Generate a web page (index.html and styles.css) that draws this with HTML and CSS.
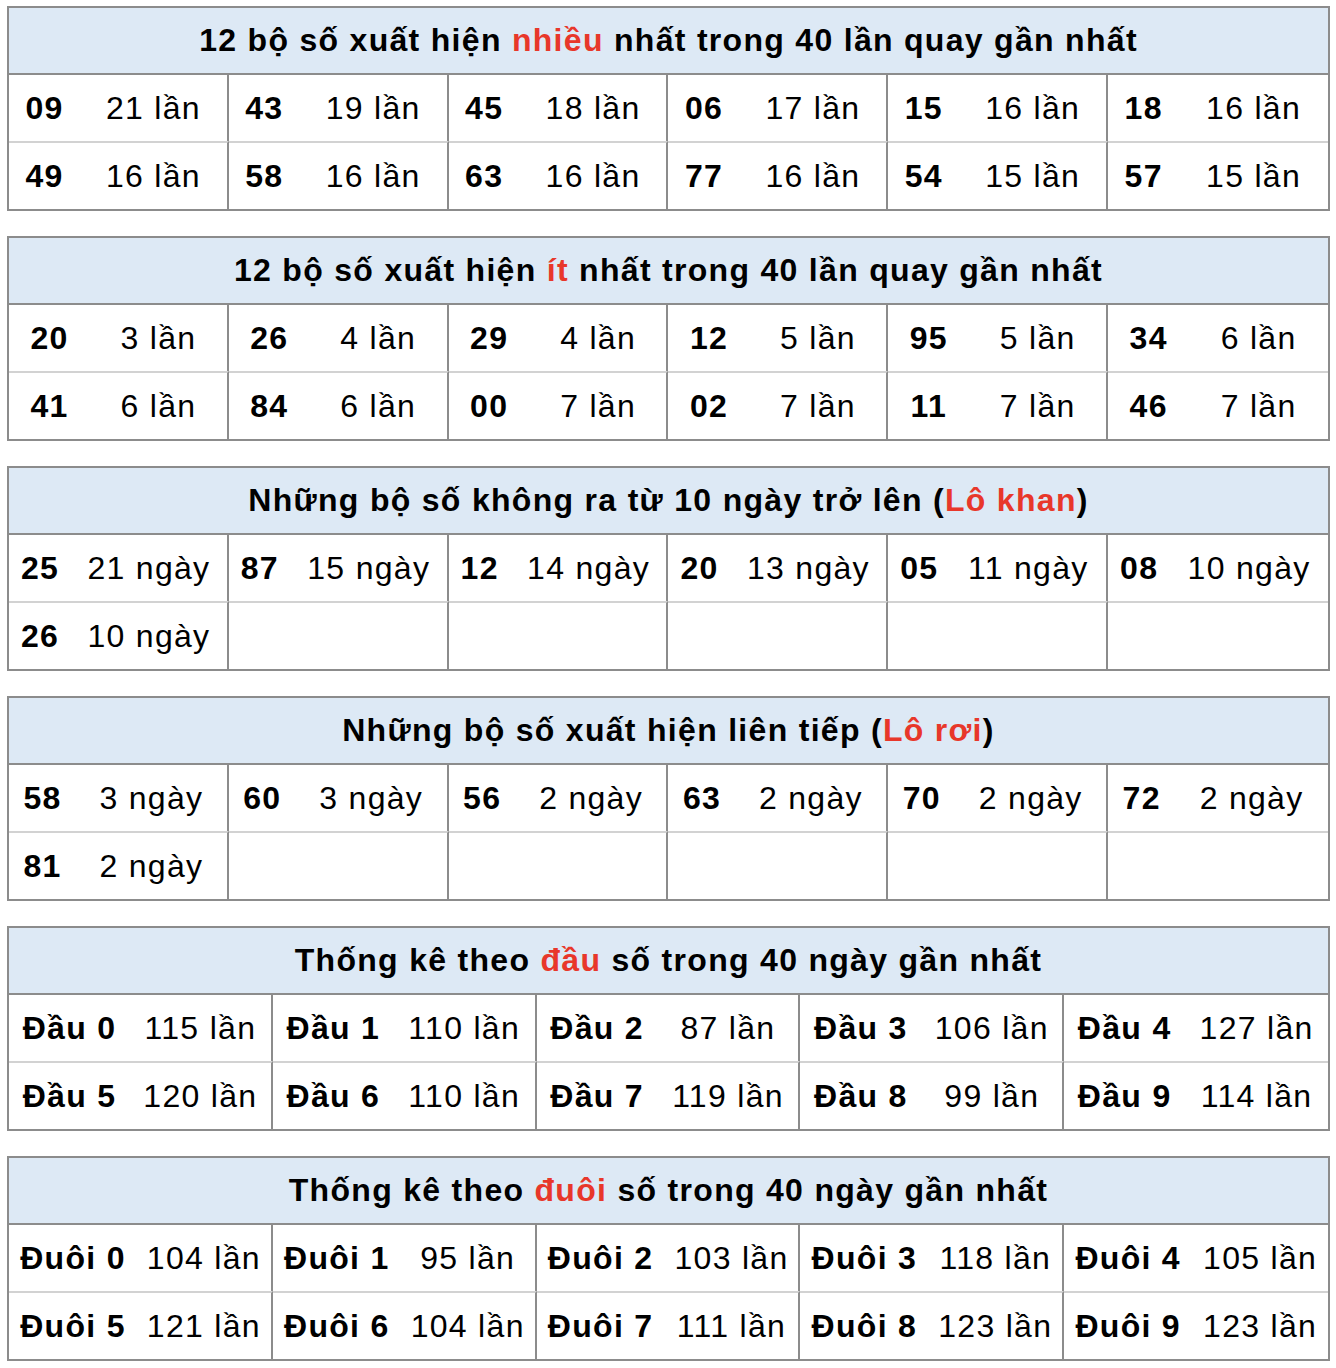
FILE: index.html
```html
<!DOCTYPE html>
<html lang="vi">
<head>
<meta charset="utf-8">
<title>Thống kê</title>
<link rel="stylesheet" href="styles.css">
</head>
<body>
<section class="stat t-most">
  <div class="head">12 bộ số xuất hiện <span class="hl">nhiều</span> nhất trong 40 lần quay gần nhất</div>
  <div class="grid six">
    <div class="pair"><b>09</b><span>21 lần</span></div>
    <div class="pair"><b>43</b><span>19 lần</span></div>
    <div class="pair"><b>45</b><span>18 lần</span></div>
    <div class="pair"><b>06</b><span>17 lần</span></div>
    <div class="pair"><b>15</b><span>16 lần</span></div>
    <div class="pair"><b>18</b><span>16 lần</span></div>
    <div class="pair"><b>49</b><span>16 lần</span></div>
    <div class="pair"><b>58</b><span>16 lần</span></div>
    <div class="pair"><b>63</b><span>16 lần</span></div>
    <div class="pair"><b>77</b><span>16 lần</span></div>
    <div class="pair"><b>54</b><span>15 lần</span></div>
    <div class="pair"><b>57</b><span>15 lần</span></div>
  </div>
</section>
<section class="stat t-least">
  <div class="head">12 bộ số xuất hiện <span class="hl">ít</span> nhất trong 40 lần quay gần nhất</div>
  <div class="grid six">
    <div class="pair"><b>20</b><span>3 lần</span></div>
    <div class="pair"><b>26</b><span>4 lần</span></div>
    <div class="pair"><b>29</b><span>4 lần</span></div>
    <div class="pair"><b>12</b><span>5 lần</span></div>
    <div class="pair"><b>95</b><span>5 lần</span></div>
    <div class="pair"><b>34</b><span>6 lần</span></div>
    <div class="pair"><b>41</b><span>6 lần</span></div>
    <div class="pair"><b>84</b><span>6 lần</span></div>
    <div class="pair"><b>00</b><span>7 lần</span></div>
    <div class="pair"><b>02</b><span>7 lần</span></div>
    <div class="pair"><b>11</b><span>7 lần</span></div>
    <div class="pair"><b>46</b><span>7 lần</span></div>
  </div>
</section>
<section class="stat t-khan">
  <div class="head">Những bộ số không ra từ 10 ngày trở lên (<span class="hl">Lô khan</span>)</div>
  <div class="grid six">
    <div class="pair"><b>25</b><span>21 ngày</span></div>
    <div class="pair"><b>87</b><span>15 ngày</span></div>
    <div class="pair"><b>12</b><span>14 ngày</span></div>
    <div class="pair"><b>20</b><span>13 ngày</span></div>
    <div class="pair"><b>05</b><span>11 ngày</span></div>
    <div class="pair"><b>08</b><span>10 ngày</span></div>
    <div class="pair"><b>26</b><span>10 ngày</span></div>
    <div class="pair"><b></b><span></span></div>
    <div class="pair"><b></b><span></span></div>
    <div class="pair"><b></b><span></span></div>
    <div class="pair"><b></b><span></span></div>
    <div class="pair"><b></b><span></span></div>
  </div>
</section>
<section class="stat t-roi">
  <div class="head">Những bộ số xuất hiện liên tiếp (<span class="hl">Lô rơi</span>)</div>
  <div class="grid six">
    <div class="pair"><b>58</b><span>3 ngày</span></div>
    <div class="pair"><b>60</b><span>3 ngày</span></div>
    <div class="pair"><b>56</b><span>2 ngày</span></div>
    <div class="pair"><b>63</b><span>2 ngày</span></div>
    <div class="pair"><b>70</b><span>2 ngày</span></div>
    <div class="pair"><b>72</b><span>2 ngày</span></div>
    <div class="pair"><b>81</b><span>2 ngày</span></div>
    <div class="pair"><b></b><span></span></div>
    <div class="pair"><b></b><span></span></div>
    <div class="pair"><b></b><span></span></div>
    <div class="pair"><b></b><span></span></div>
    <div class="pair"><b></b><span></span></div>
  </div>
</section>
<section class="stat t-dau">
  <div class="head">Thống kê theo <span class="hl">đầu</span> số trong 40 ngày gần nhất</div>
  <div class="grid five">
    <div class="pair"><b>Đầu 0</b><span>115 lần</span></div>
    <div class="pair"><b>Đầu 1</b><span>110 lần</span></div>
    <div class="pair"><b>Đầu 2</b><span>87 lần</span></div>
    <div class="pair"><b>Đầu 3</b><span>106 lần</span></div>
    <div class="pair"><b>Đầu 4</b><span>127 lần</span></div>
    <div class="pair"><b>Đầu 5</b><span>120 lần</span></div>
    <div class="pair"><b>Đầu 6</b><span>110 lần</span></div>
    <div class="pair"><b>Đầu 7</b><span>119 lần</span></div>
    <div class="pair"><b>Đầu 8</b><span>99 lần</span></div>
    <div class="pair"><b>Đầu 9</b><span>114 lần</span></div>
  </div>
</section>
<section class="stat t-duoi">
  <div class="head">Thống kê theo <span class="hl">đuôi</span> số trong 40 ngày gần nhất</div>
  <div class="grid five">
    <div class="pair"><b>Đuôi 0</b><span>104 lần</span></div>
    <div class="pair"><b>Đuôi 1</b><span>95 lần</span></div>
    <div class="pair"><b>Đuôi 2</b><span>103 lần</span></div>
    <div class="pair"><b>Đuôi 3</b><span>118 lần</span></div>
    <div class="pair"><b>Đuôi 4</b><span>105 lần</span></div>
    <div class="pair"><b>Đuôi 5</b><span>121 lần</span></div>
    <div class="pair"><b>Đuôi 6</b><span>104 lần</span></div>
    <div class="pair"><b>Đuôi 7</b><span>111 lần</span></div>
    <div class="pair"><b>Đuôi 8</b><span>123 lần</span></div>
    <div class="pair"><b>Đuôi 9</b><span>123 lần</span></div>
  </div>
</section>
</body>
</html>
```
FILE: styles.css
```css
* { box-sizing: border-box; }

body {
  margin: 0;
  padding: 6px 0 0 7px;
  background: #ffffff;
  color: #000000;
  font-family: "Liberation Sans", Arial, sans-serif;
  font-size: 32px;
  letter-spacing: 1.3px;
}

.stat {
  width: 1323px;
  border: 2px solid #8c8c8c;
  margin-bottom: 25px;
}

.head {
  height: 67px;
  line-height: 65px;
  background: #dde9f5;
  border-bottom: 2px solid #8c8c8c;
  font-weight: 700;
  text-align: center;
  white-space: nowrap;
}

.hl { color: #e8372a; }

.grid { display: grid; }
.grid.six { grid-template-columns: repeat(6, 1fr); }
.grid.five { grid-template-columns: repeat(5, 1fr); }

.pair {
  display: grid;
  grid-template-columns: var(--num) 1fr;
  height: 66px;
  border-right: 2px solid #8c8c8c;
}
.six .pair:nth-child(n+7) { border-top: 2px solid #d2d2d2; height: 68px; }
.six .pair:nth-child(6n) { border-right: 0; }

.five .pair:nth-child(n+6) { border-top: 2px solid #d2d2d2; height: 68px; }
.five .pair:nth-child(5n) { border-right: 0; }

.pair b, .pair span {
  display: flex;
  align-items: center;
  justify-content: center;
  white-space: nowrap;
}
.pair b { font-weight: 700; }
.pair span { font-weight: 400; }

.t-most { --num: 71px; }
.t-least { --num: 81px; }
.t-khan { --num: 62px; }
.t-roi { --num: 67px; }
.t-dau { --num: 121px; }
.t-duoi { --num: 128px; }
```
